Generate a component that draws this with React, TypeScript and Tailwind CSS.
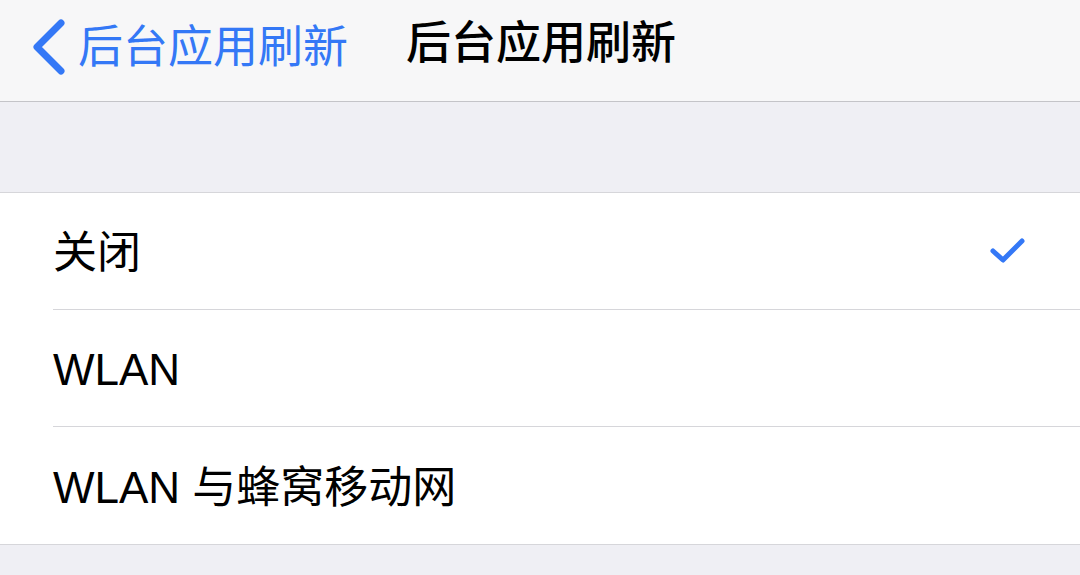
import React from 'react';

const font = { fontFamily: '"Liberation Sans", "Noto Sans CJK SC", sans-serif' };

const options = [
  { label: '关闭', checked: true },
  { label: 'WLAN', checked: false },
  { label: 'WLAN 与蜂窝移动网', checked: false },
];

export default function App() {
  return (
    <div className="w-[1080px] h-[575px] overflow-hidden bg-[#efeff4]" style={font}>
      {/* Navigation bar */}
      <header className="h-[102px] bg-[#f7f7f8] border-b border-[#c4c4c8] flex items-start pt-[18px]">
        <div className="flex items-center">
          <svg width="40" height="60" viewBox="0 0 40 60" className="ml-[28px]">
            <path
              d="M33 5 L9 29 L33 53"
              fill="none"
              stroke="#3478f6"
              strokeWidth="7"
              strokeLinecap="round"
              strokeLinejoin="round"
            />
          </svg>
          <span className="ml-[10px] text-[45px] leading-[52px] text-[#3478f6]">后台应用刷新</span>
        </div>
        <h1 className="ml-[58px] text-[45px] leading-[52px] font-medium text-black">后台应用刷新</h1>
      </header>

      {/* Spacer */}
      <div className="h-[90px]" />

      {/* Options list */}
      <ul className="bg-white border-y border-[#d6d6da]">
        {options.map((o, i) => (
          <li key={o.label} className="pl-[53px]">
            <div
              className={`h-[117px] flex items-center justify-between pr-[54px] ${
                i < options.length - 1 ? 'border-b border-[#d6d6da]' : ''
              }`}
            >
              <span className="text-[44px] leading-none text-black pt-[4px]">{o.label}</span>
              {o.checked && (
                <svg width="36" height="30" viewBox="0 0 36 30">
                  <path
                    d="M3 15 L13 24 L32 5"
                    fill="none"
                    stroke="#3478f6"
                    strokeWidth="5"
                    strokeLinecap="round"
                    strokeLinejoin="round"
                  />
                </svg>
              )}
            </div>
          </li>
        ))}
      </ul>
    </div>
  );
}
